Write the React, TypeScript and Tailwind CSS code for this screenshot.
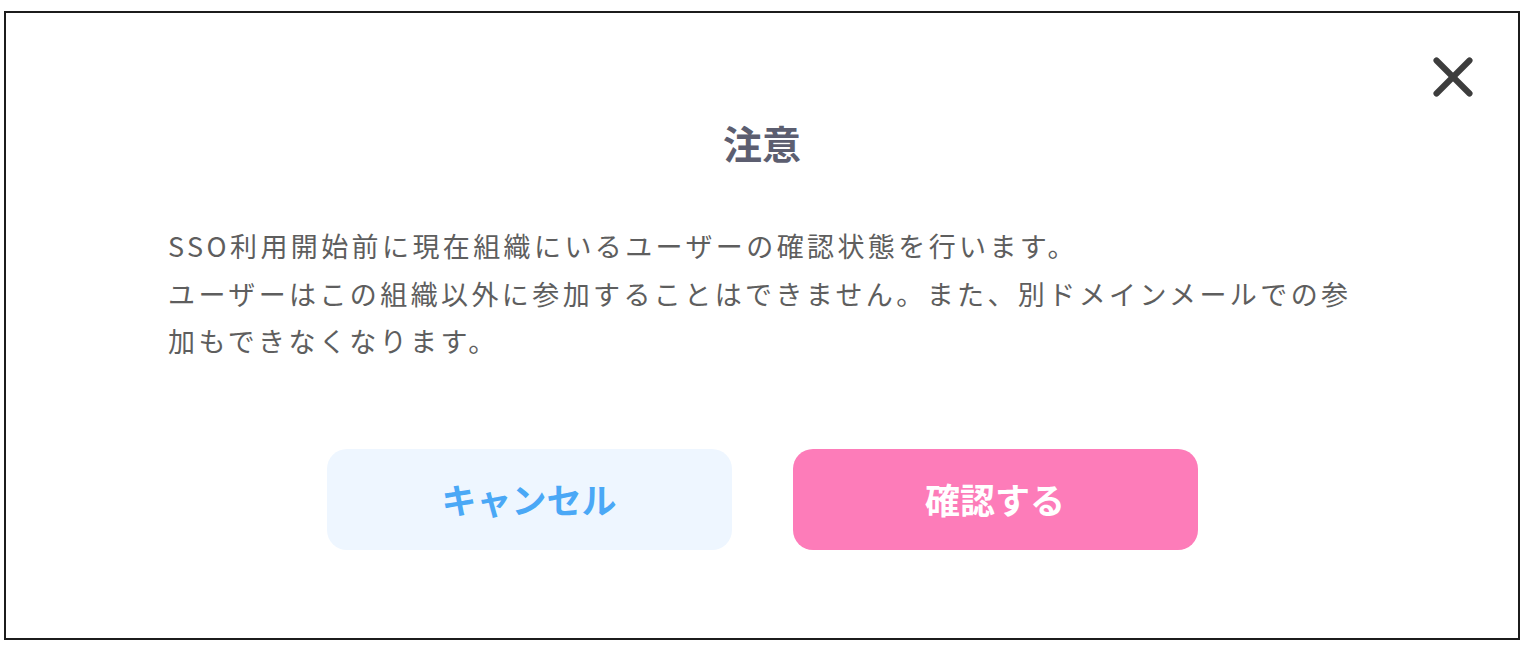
import { X } from "lucide-react"

const font = { fontFamily: '"Noto Sans CJK JP", "Noto Sans", sans-serif' }

export default function App() {
  return (
    <div className="min-h-screen bg-white pt-[11px] pl-[4px]" style={font}>
      <div className="relative w-[1516px] h-[629px] border-2 border-[#1c1c1c] bg-white">
        <button
          className="absolute right-[32px] top-[31px] text-[#3d3d3d]"
          aria-label="閉じる"
        >
          <X size={66} strokeWidth={2.2} />
        </button>

        <div className="flex flex-col items-center pt-[107px]">
          <h2 className="text-[39px] leading-[44px] font-bold text-[#5c5e70]">注意</h2>

          <p className="mt-[58px] w-[1200px] ml-[12px] text-[27px] leading-[47.5px] tracking-[3.4px] text-[#5e5e5e]">
            SSO利用開始前に現在組織にいるユーザーの確認状態を行います。
            <br />
            ユーザーはこの組織以外に参加することはできません。また、別ドメインメールでの参加もできなくなります。
          </p>

          <div className="mt-[84px] flex gap-[61px]">
            <button className="w-[405px] h-[101px] rounded-[20px] bg-[#eef6ff] text-[35px] font-bold text-[#4aa8f6]">
              キャンセル
            </button>
            <button className="w-[405px] h-[101px] rounded-[20px] bg-[#fd7cb9] text-[35px] font-bold text-white">
              確認する
            </button>
          </div>
        </div>
      </div>
    </div>
  )
}
